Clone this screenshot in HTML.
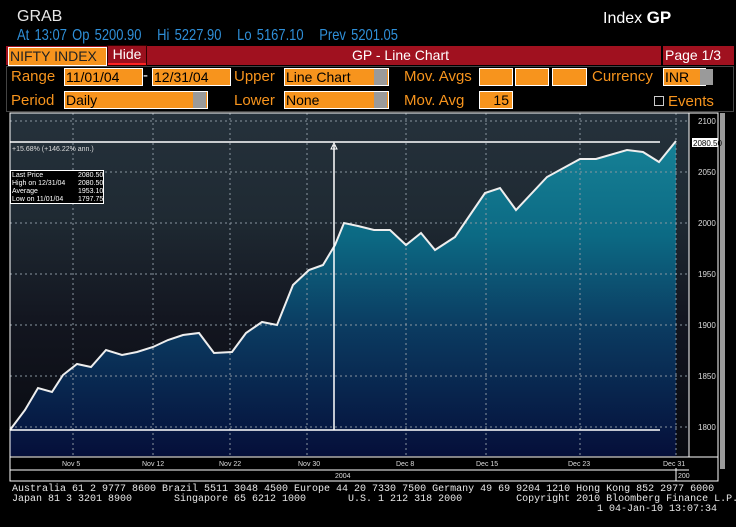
<!DOCTYPE html>
<html><head><meta charset="utf-8"><style>
body{margin:0;width:736px;height:527px;background:#000;overflow:hidden;font-family:"Liberation Sans",sans-serif;position:relative}
.a{position:absolute;white-space:nowrap}
.o{color:#f7941d;font-size:15px}
.box{position:absolute;background:#f7941d;border:1px solid #fff;color:#000;font-size:14px;height:16px;line-height:16px;padding-left:1px;box-sizing:content-box}
.gr{position:absolute;background:#9a9a9a}
.ft{color:#e8e8e8;font-family:"Liberation Mono",monospace;font-size:10px;line-height:10px}
</style></head><body>
<div class="a" style="left:17px;top:8px;color:#e8e8e8;font-size:16px">GRAB</div>
<div class="a" style="left:603px;top:8px;color:#fff;font-size:16px">Index <b style="font-size:17px">GP</b></div>
<div class="a" style="left:17px;top:27px;color:#2f8fd8;font-size:16px;word-spacing:2px;transform:scaleX(0.81);transform-origin:0 0">At 13:07 Op 5200.90 &nbsp;&nbsp;Hi 5227.90 &nbsp;&nbsp;Lo 5167.10 &nbsp;&nbsp;Prev 5201.05</div>
<div class="a" style="left:6px;top:46px;width:728px;height:19px;background:#a0111f"></div>
<div class="box" style="left:8px;top:47px;width:96px;height:17px;font-size:14px;color:#222">NIFTY INDEX</div>
<div class="a" style="left:108px;top:46px;width:38px;height:17px;border-bottom:2px solid #f22;color:#fff;font-size:14px;text-align:center;line-height:17px;background:#9a101d;outline:1px solid #300">Hide</div>
<div class="a" style="left:352px;top:47px;color:#fff;font-size:14px">GP - Line Chart</div>
<div class="a" style="left:661px;top:46px;width:2px;height:19px;background:#000"></div>
<div class="a" style="left:665px;top:47px;color:#fff;font-size:14px">Page 1/3</div>
<div class="a" style="left:6px;top:66px;width:728px;height:46px;border:1px solid #444;box-sizing:border-box"></div>
<div class="a o" style="left:11px;top:68px">Range</div>
<div class="box" style="left:64px;top:68px;width:76px">11/01/04</div>
<div class="a o" style="left:143px;top:67px;color:#fff">-</div>
<div class="box" style="left:152px;top:68px;width:76px">12/31/04</div>
<div class="a o" style="left:234px;top:68px">Upper</div>
<div class="box" style="left:284px;top:68px;width:102px">Line Chart</div><div class="gr" style="left:374px;top:69px;width:13px;height:16px"></div>
<div class="a o" style="left:404px;top:68px">Mov. Avgs</div>
<div class="box" style="left:479px;top:68px;width:31px"></div>
<div class="box" style="left:515px;top:68px;width:31px"></div>
<div class="box" style="left:552px;top:68px;width:32px"></div>
<div class="a o" style="left:592px;top:68px">Currency</div>
<div class="box" style="left:663px;top:68px;width:40px">INR</div><div class="gr" style="left:700px;top:69px;width:13px;height:16px"></div>
<div class="a o" style="left:11px;top:92px">Period</div>
<div class="box" style="left:64px;top:91px;width:141px">Daily</div><div class="gr" style="left:193px;top:92px;width:13px;height:16px"></div>
<div class="a o" style="left:234px;top:92px">Lower</div>
<div class="box" style="left:284px;top:91px;width:102px">None</div><div class="gr" style="left:374px;top:92px;width:13px;height:16px"></div>
<div class="a o" style="left:404px;top:92px">Mov. Avg</div>
<div class="box" style="left:479px;top:91px;text-align:right;padding-right:3px;width:28px">15</div>
<div class="a" style="left:654px;top:96px;width:8px;height:8px;border:1px solid #ccc"></div>
<div class="a o" style="left:668px;top:93px">Events</div>
<svg class="a" style="left:0;top:0" width="736" height="527">
<defs>
<linearGradient id="bg" x1="0" y1="113" x2="0" y2="456" gradientUnits="userSpaceOnUse"><stop offset="0" stop-color="#25313b"/><stop offset="0.3" stop-color="#1f2a33"/><stop offset="0.6" stop-color="#131620"/><stop offset="1" stop-color="#080a10"/></linearGradient>
<linearGradient id="fg" x1="0" y1="141" x2="0" y2="456" gradientUnits="userSpaceOnUse"><stop offset="0" stop-color="#168196"/><stop offset="0.3" stop-color="#0c6a84"/><stop offset="0.6" stop-color="#0b3a60"/><stop offset="1" stop-color="#050f3a"/></linearGradient>
</defs>
<rect x="10" y="113" width="679" height="344" fill="url(#bg)"/>
<polygon fill="url(#fg)" points="10,430 25,410 38,388 52,392 63,375 77,364 91,367 106,350 122,355 137,352 153,347 168,340 183,335 199,333 214,353 232,352 246,333 262,322 277,325 293,285 309,270 323,265 335,245 344,223 358,226 374,230 390,230 406,245 421,233 435,250 455,237 485,193 500,188 516,210 547,177 580,159 596,159 627,150 643,152 659,162 676,141 676,456 10,456"/>
<g stroke="#8a96a0" stroke-width="1" stroke-dasharray="2,3" fill="none">
<path d="M10 121H689M10 172H689M10 223H689M10 274H689M10 325H689M10 376H689M10 427H689"/>
<path d="M73 113V456M153 113V456M230 113V456M307 113V456M406 113V456M486 113V456M580 113V456M676 113V456"/>
</g>
<polyline fill="none" stroke="#eee" stroke-width="2" points="10,430 25,410 38,388 52,392 63,375 77,364 91,367 106,350 122,355 137,352 153,347 168,340 183,335 199,333 214,353 232,352 246,333 262,322 277,325 293,285 309,270 323,265 335,245 344,223 358,226 374,230 390,230 406,245 421,233 435,250 455,237 485,193 500,188 516,210 547,177 580,159 596,159 627,150 643,152 659,162 676,141"/>
<path d="M10 142H660M10 430H660M334 145V430" stroke="#fff" stroke-width="1.5"/>
<path d="M331 149L334 143L337 149Z" fill="none" stroke="#fff"/>
<rect x="689" y="113" width="29" height="344" fill="#000"/>
<path d="M10 113H718V481H10Z" fill="none" stroke="#fff"/>
<path d="M10 457H718M689 113V457M676 468V481M10 470H689" stroke="#fff"/>
<rect x="720" y="113" width="5" height="356" fill="#9a9a9a"/>
<g fill="#ddd" font-size="8" font-family="Liberation Sans">
<text x="698" y="124">2100</text><text x="698" y="175">2050</text><text x="698" y="226">2000</text><text x="698" y="277">1950</text><text x="698" y="328">1900</text><text x="698" y="379">1850</text><text x="698" y="430">1800</text>
<rect x="692" y="138" width="26" height="9" fill="#fff"/><text x="693" y="146" fill="#000">2080.50</text>
<text x="62" y="466" font-size="7">Nov 5</text><text x="142" y="466" font-size="7">Nov 12</text><text x="219" y="466" font-size="7">Nov 22</text><text x="298" y="466" font-size="7">Nov 30</text><text x="396" y="466" font-size="7">Dec 8</text><text x="476" y="466" font-size="7">Dec 15</text><text x="568" y="466" font-size="7">Dec 23</text><text x="663" y="466" font-size="7">Dec 31</text>
<text x="335" y="478" font-size="7">2004</text><text x="678" y="478" font-size="7">200</text>
<text x="12" y="151" font-size="7">+15.68% (+146.22% ann.)</text>
</g>
<rect x="10.5" y="170.5" width="93" height="33" fill="#000" stroke="#fff"/>
<g fill="#fff" font-size="7" font-family="Liberation Sans">
<text x="12" y="177">Last Price</text><text x="78" y="177">2080.50</text>
<text x="12" y="185">High on 12/31/04</text><text x="78" y="185">2080.50</text>
<text x="12" y="193">Average</text><text x="78" y="193">1953.10</text>
<text x="12" y="201">Low on 11/01/04</text><text x="78" y="201">1797.75</text>
</g>
</svg>
<div class="a ft" style="left:12px;top:485px">Australia 61 2 9777 8600 Brazil 5511 3048 4500 Europe 44 20 7330 7500 Germany 49 69 9204 1210 Hong Kong 852 2977 6000</div>
<div class="a ft" style="left:12px;top:495px">Japan 81 3 3201 8900&nbsp;&nbsp;&nbsp;&nbsp;&nbsp;&nbsp; Singapore 65 6212 1000&nbsp;&nbsp;&nbsp;&nbsp;&nbsp;&nbsp; U.S. 1 212 318 2000&nbsp;&nbsp;&nbsp;&nbsp;&nbsp;&nbsp;&nbsp;&nbsp; Copyright 2010 Bloomberg Finance L.P.</div>
<div class="a ft" style="left:597px;top:505px">1 04-Jan-10 13:07:34</div>
</body></html>
